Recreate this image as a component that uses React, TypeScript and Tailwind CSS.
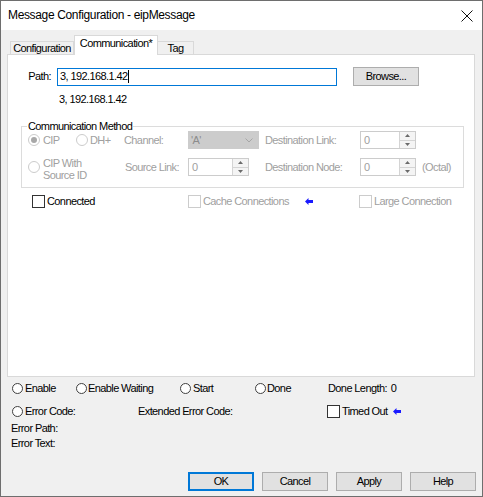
import React from "react";

const dis = "text-[#a0a0a0]";

function DRadio({ checked }: { checked?: boolean }) {
  return (
    <span className="w-[12px] h-[12px] rounded-full border border-[#cccccc] bg-white flex items-center justify-center shrink-0">
      {checked && <span className="w-[6px] h-[6px] rounded-full bg-[#a8a8a8]" />}
    </span>
  );
}

function SRadio() {
  return <span className="w-[11px] h-[11px] rounded-full border border-[#404040] bg-white shrink-0" />;
}

function Check({ disabled }: { disabled?: boolean }) {
  return (
    <span
      className={
        disabled
          ? "w-[13px] h-[13px] border border-[#cccccc] bg-white shrink-0"
          : "w-[13px] h-[13px] border border-[#333333] bg-white shrink-0"
      }
    />
  );
}

function Arrow() {
  return (
    <svg width="8" height="7" viewBox="0 0 8 7" className="shrink-0">
      <polygon points="0,3.5 3.5,0 3.5,2 8,2 8,5 3.5,5 3.5,7" fill="#1a1aff" />
    </svg>
  );
}

function Spin({ cls }: { cls: string }) {
  return (
    <div className={cls}>
      <div className="flex-1 pl-[3px] text-[#a0a0a0] leading-[16px]">0</div>
      <div className="w-[16px] flex flex-col border-l border-[#d4d4d4] bg-[#f4f4f4]">
        <div className="flex-1 flex items-center justify-center border-b border-[#d4d4d4]">
          <svg width="5" height="3" viewBox="0 0 5 3">
            <polygon points="0,3 2.5,0 5,3" fill="#6a6a6a" />
          </svg>
        </div>
        <div className="flex-1 flex items-center justify-center">
          <svg width="5" height="3" viewBox="0 0 5 3">
            <polygon points="0,0 5,0 2.5,3" fill="#6a6a6a" />
          </svg>
        </div>
      </div>
    </div>
  );
}

function Btn({ label, def }: { label: string; def?: boolean }) {
  return (
    <div
      className={
        def
          ? "w-[66px] h-[19px] border-2 border-[#0078d7] bg-[#e1e1e1] flex items-center justify-center leading-[13px]"
          : "w-[66px] h-[19px] border border-[#adadad] bg-[#e1e1e1] flex items-center justify-center leading-[13px]"
      }
    >
      {label}
    </div>
  );
}

export default function App() {
  return (
    <div
      className="w-[483px] h-[497px] border border-[#6e6e6e] bg-[#f0f0f0] flex flex-col text-black text-[11px] tracking-[-0.6px] leading-[13px]"
      style={{ fontFamily: '"Liberation Sans", Arial, sans-serif' }}
    >
      {/* Title bar */}
      <div className="h-[29px] bg-white flex items-center justify-between pl-[7px] pr-[9px] shrink-0">
        <span className="text-[12px] tracking-[-0.35px]">Message Configuration - eipMessage</span>
        <svg width="12" height="12" viewBox="0 0 12 12">
          <path d="M0.5 0.5 L11.5 11.5 M11.5 0.5 L0.5 11.5" stroke="#111" strokeWidth="1" />
        </svg>
      </div>

      {/* Tabs */}
      <div className="mt-[5px] h-[19px] flex items-end pl-[9px] relative z-10">
        <div className="w-[64px] h-[13px] border border-b-0 border-[#d9d9d9] bg-[#f0f0f0] flex items-center justify-center">
          Configuration
        </div>
        <div className="w-[84px] h-[20px] -mb-[1px] border border-b-0 border-[#d9d9d9] bg-white flex justify-center pt-[1px]">
          Communication*
        </div>
        <div className="w-[36px] h-[13px] border border-b-0 border-l-0 border-[#d9d9d9] bg-[#f0f0f0] flex items-center justify-center">
          Tag
        </div>
      </div>

      {/* Panel */}
      <div className="ml-[6px] w-[468px] h-[323px] border border-[#d9d9d9] bg-white flex flex-col shrink-0">
        {/* Path row */}
        <div className="mt-[12px] h-[19px] flex items-center">
          <div className="w-[49px] pr-[6px] text-right">Path:</div>
          <div className="w-[280px] h-[18px] border border-[#0078d7] bg-white flex items-center pl-[2px]">
            <span>3, 192.168.1.42</span>
            <span className="w-[1px] h-[13px] bg-black ml-[1px]" />
          </div>
          <div className="ml-[16px] w-[66px] h-[19px] border border-[#adadad] bg-[#e1e1e1] flex items-center justify-center">
            Browse...
          </div>
        </div>
        <div className="mt-[7px] pl-[51px]">3, 192.168.1.42</div>

        {/* Group box */}
        <div className="mt-[20px] ml-[13px] w-[443px] h-[62px] border border-[#dcdcdc] relative flex flex-col shrink-0">
          <span className="absolute -top-[7px] left-[5px] px-[1px] bg-white">Communication Method</span>
          {/* Row A */}
          <div className="mt-[4px] h-[18px] flex items-center pl-[6px]">
            <div className="w-[48px] flex items-center gap-[3px]">
              <DRadio checked />
              <span className={dis}>CIP</span>
            </div>
            <div className="w-[48px] flex items-center gap-[2px]">
              <DRadio />
              <span className={dis}>DH+</span>
            </div>
            <div className={"w-[64px] " + dis}>Channel:</div>
            <div className="w-[71px] h-[18px] bg-[#cccccc] border border-[#cccccc] flex items-center justify-between pl-[2px] pr-[5px]">
              <span className="text-[#8c8c8c]">'A'</span>
              <svg width="8" height="5" viewBox="0 0 8 5">
                <path d="M0.5 0.5 L4 4 L7.5 0.5" stroke="#a6a6a6" fill="none" strokeWidth="1" />
              </svg>
            </div>
            <div className={"ml-[6px] w-[95px] " + dis}>Destination Link:</div>
            <Spin cls="w-[56px] h-[18px] border border-[#cccccc] bg-white flex" />
          </div>
          {/* Row B */}
          <div className="mt-[9px] h-[18px] flex items-center pl-[6px]">
            <div className="w-[97px] flex items-center gap-[3px]">
              <DRadio />
              <span className={"leading-[12px] pt-[4px] " + dis}>
                CIP With
                <br />
                Source ID
              </span>
            </div>
            <div className={"w-[63px] " + dis}>Source Link:</div>
            <Spin cls="w-[61px] h-[18px] border border-[#cccccc] bg-white flex" />
            <div className={"ml-[16px] w-[95px] " + dis}>Destination Node:</div>
            <Spin cls="w-[56px] h-[18px] border border-[#cccccc] bg-white flex" />
            <span className={"ml-[6px] " + dis}>(Octal)</span>
          </div>
        </div>

        {/* Connected row */}
        <div className="mt-[7px] h-[13px] flex items-center pl-[24px]">
          <div className="w-[156px] flex items-center gap-[2px]">
            <Check />
            <span>Connected</span>
          </div>
          <div className="w-[115px] flex items-center gap-[2px]">
            <Check disabled />
            <span className={dis}>Cache Connections</span>
          </div>
          <div className="w-[56px] flex items-center pl-[2px]">
            <Arrow />
          </div>
          <div className="flex items-center gap-[2px]">
            <Check disabled />
            <span className={dis}>Large Connection</span>
          </div>
        </div>
      </div>

      {/* Status rows */}
      <div className="mt-[5px] h-[13px] flex items-center pl-[11px]">
        <div className="w-[64px] flex items-center gap-[2px]">
          <SRadio />
          <span>Enable</span>
        </div>
        <div className="w-[104px] flex items-center gap-[1px]">
          <SRadio />
          <span>Enable Waiting</span>
        </div>
        <div className="w-[75px] flex items-center gap-[2px]">
          <SRadio />
          <span>Start</span>
        </div>
        <div className="w-[73px] flex items-center gap-[1px]">
          <SRadio />
          <span>Done</span>
        </div>
        <div className="flex items-center">
          <span>Done Length:</span>
          <span className="ml-[4px]">0</span>
        </div>
      </div>
      <div className="mt-[10px] h-[13px] flex items-center pl-[11px]">
        <div className="w-[126px] flex items-center gap-[2px]">
          <SRadio />
          <span>Error Code:</span>
        </div>
        <div className="w-[189px]">Extended Error Code:</div>
        <div className="flex items-center gap-[2px]">
          <Check />
          <span>Timed Out</span>
          <span className="ml-[3px]">
            <Arrow />
          </span>
        </div>
      </div>
      <div className="mt-[4px] pl-[10px]">Error Path:</div>
      <div className="mt-[2px] pl-[10px]">Error Text:</div>

      {/* Buttons */}
      <div className="mt-[22px] flex justify-end gap-[8px] pr-[6px]">
        <Btn label="OK" def />
        <Btn label="Cancel" />
        <Btn label="Apply" />
        <Btn label="Help" />
      </div>
    </div>
  );
}
